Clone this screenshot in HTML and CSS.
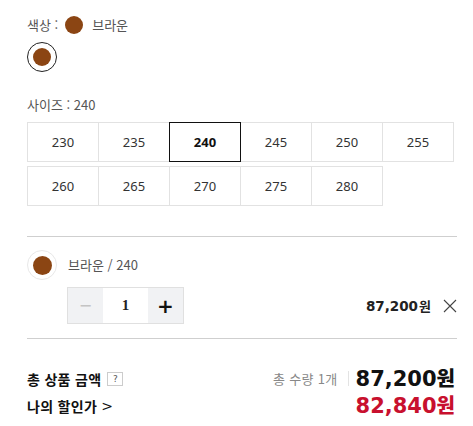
FILE: index.html
```html
<!DOCTYPE html>
<html lang="ko">
<head>
<meta charset="utf-8">
<link rel="stylesheet" href="styles.css">
</head>
<body>
<div class="wrap">
  <div class="color-label">
    <span>색상 :</span>
    <span class="dot dot-sm"></span>
    <span>브라운</span>
  </div>
  <div class="swatches">
    <span class="swatch is-selected"><span class="dot"></span></span>
  </div>
  <div class="size-label">사이즈 : 240</div>
  <div class="sizes">
    <span class="size">230</span>
    <span class="size">235</span>
    <span class="size is-selected">240</span>
    <span class="size">245</span>
    <span class="size">250</span>
    <span class="size">255</span>
    <span class="size">260</span>
    <span class="size">265</span>
    <span class="size">270</span>
    <span class="size">275</span>
    <span class="size">280</span>
  </div>
  <div class="rule rule-top"></div>
  <div class="option">
    <div class="opt-head">
      <span class="opt-thumb"><span class="dot"></span></span>
      <span class="opt-name">브라운 / 240</span>
    </div>
    <div class="opt-row">
      <div class="stepper">
        <span class="step minus">−</span>
        <span class="qty">1</span>
        <span class="step plus">+</span>
      </div>
      <div class="opt-price">87,200<span class="won">원</span></div>
      <span class="remove">
        <svg width="14" height="14" viewBox="0 0 14 14"><path d="M1 1L13 13M13 1L1 13" stroke="#444" stroke-width="1.1" fill="none"/></svg>
      </span>
    </div>
  </div>
  <div class="rule"></div>
  <div class="totals">
    <div class="tot-row">
      <div class="tot-left"><span class="tot-title">총 상품 금액</span><span class="help">?</span></div>
      <div class="tot-right"><span class="count">총 수량 1개</span><span class="vbar"></span><span class="big">87,200<span class="won">원</span></span></div>
    </div>
    <div class="tot-row row2">
      <div class="tot-left"><span class="tot-title">나의 할인가</span><span class="chev">&gt;</span></div>
      <div class="tot-right"><span class="big red">82,840<span class="won">원</span></span></div>
    </div>
  </div>
</div>
</body>
</html>
```

FILE: styles.css
```css
* { box-sizing: border-box; }
html, body { margin: 0; padding: 0; background: #fff; }
body {
  font-family: "Noto Sans CJK KR", "Noto Sans", sans-serif;
  color: #333;
  font-size: 13px;
}
.wrap {
  width: 430px;
  margin-left: 27px;
  padding-top: 16px;
}
.dot {
  display: block;
  width: 18px;
  height: 18px;
  border-radius: 50%;
  background: #8b4513;
}
.color-label {
  display: flex;
  align-items: center;
  height: 18px;
  line-height: 18px;
  color: #555;
  font-size: 13px;
}
.color-label .dot-sm { margin: 0 9px 0 7px; }
.swatches { margin-top: 8px; display: flex; }
.swatch {
  width: 30px;
  height: 30px;
  border-radius: 50%;
  border: 1px solid #222;
  display: flex;
  align-items: center;
  justify-content: center;
}
.size-label {
  margin-top: 24px;
  height: 18px;
  line-height: 18px;
  color: #555;
  font-size: 13px;
}
.sizes {
  margin-top: 8px;
  display: grid;
  grid-template-columns: repeat(6, 71px);
  grid-auto-rows: 40px;
  row-gap: 4px;
}
.size {
  margin-right: -1px;
  border: 1px solid #e2e2e2;
  display: flex;
  align-items: center;
  justify-content: center;
  font-family: "Noto Sans", sans-serif;
  font-size: 13px;
  color: #333;
}
.size.is-selected {
  border-color: #111;
  font-weight: bold;
  color: #111;
  z-index: 1;
}
.rule { height: 1px; background: #cfcfcf; }
.rule-top { margin-top: 30px; }
.option { padding: 13px 0 14px; }
.opt-head { display: flex; align-items: center; }
.opt-thumb {
  width: 30px;
  height: 30px;
  border-radius: 50%;
  border: 1px solid #e8e8e8;
  display: flex;
  align-items: center;
  justify-content: center;
}
.opt-thumb .dot { width: 19px; height: 19px; }
.opt-name { margin-left: 11px; color: #555; font-size: 13px; line-height: 18px; }
.opt-row {
  margin-top: 7px;
  margin-left: 40px;
  display: flex;
  align-items: center;
}
.stepper {
  display: flex;
  height: 37px;
  border: 1px solid #e0e0e0;
}
.step {
  width: 35px;
  background: #f1f2f4;
  display: flex;
  align-items: center;
  justify-content: center;
  font-family: "DejaVu Sans", sans-serif;
}
.minus { color: #c4c4c4; font-size: 16px; }
.plus { color: #111; font-size: 20px; font-weight: bold; width: 35px; }
.qty {
  width: 45px;
  display: flex;
  align-items: center;
  justify-content: center;
  font-family: "Liberation Serif", serif;
  font-weight: bold;
  font-size: 15px;
  color: #222;
}
.opt-price {
  margin-left: auto;
  font-family: "DejaVu Sans", sans-serif;
  font-weight: bold;
  font-size: 13.5px;
  color: #222;
}
.opt-price .won { font-family: "Noto Sans CJK KR", sans-serif; font-size: 13px; margin-left: 1px; }
.remove { margin-left: 12px; display: flex; }
.totals { padding-top: 27px; }
.tot-row {
  display: flex;
  justify-content: space-between;
  align-items: center;
  height: 25px;
}
.row2 { margin-top: 2px; }
.tot-left { display: flex; align-items: center; }
.tot-title { font-weight: bold; color: #111; font-size: 14px; letter-spacing: 0.3px; }
.help {
  margin-left: 6px;
  width: 16px;
  height: 14px;
  border: 1px solid #ccc;
  font-family: "DejaVu Sans", sans-serif;
  font-size: 9px;
  color: #555;
  display: flex;
  align-items: center;
  justify-content: center;
}
.chev { margin-left: 4px; font-family: "DejaVu Sans", sans-serif; font-size: 14px; color: #111; }
.tot-right { display: flex; align-items: center; margin-right: 2px; }
.count { color: #888; font-size: 13px; letter-spacing: 0.3px; }
.vbar { width: 1px; height: 15px; background: #e3e3e3; margin: 0 7px 0 10px; }
.big {
  font-family: "DejaVu Sans", sans-serif;
  font-weight: bold;
  font-size: 21px;
  color: #111;
  line-height: 25px;
}
.big .won { font-family: "Noto Sans CJK KR", sans-serif; font-size: 20px; font-weight: 900; }
.big.red { color: #c8102e; }
```
